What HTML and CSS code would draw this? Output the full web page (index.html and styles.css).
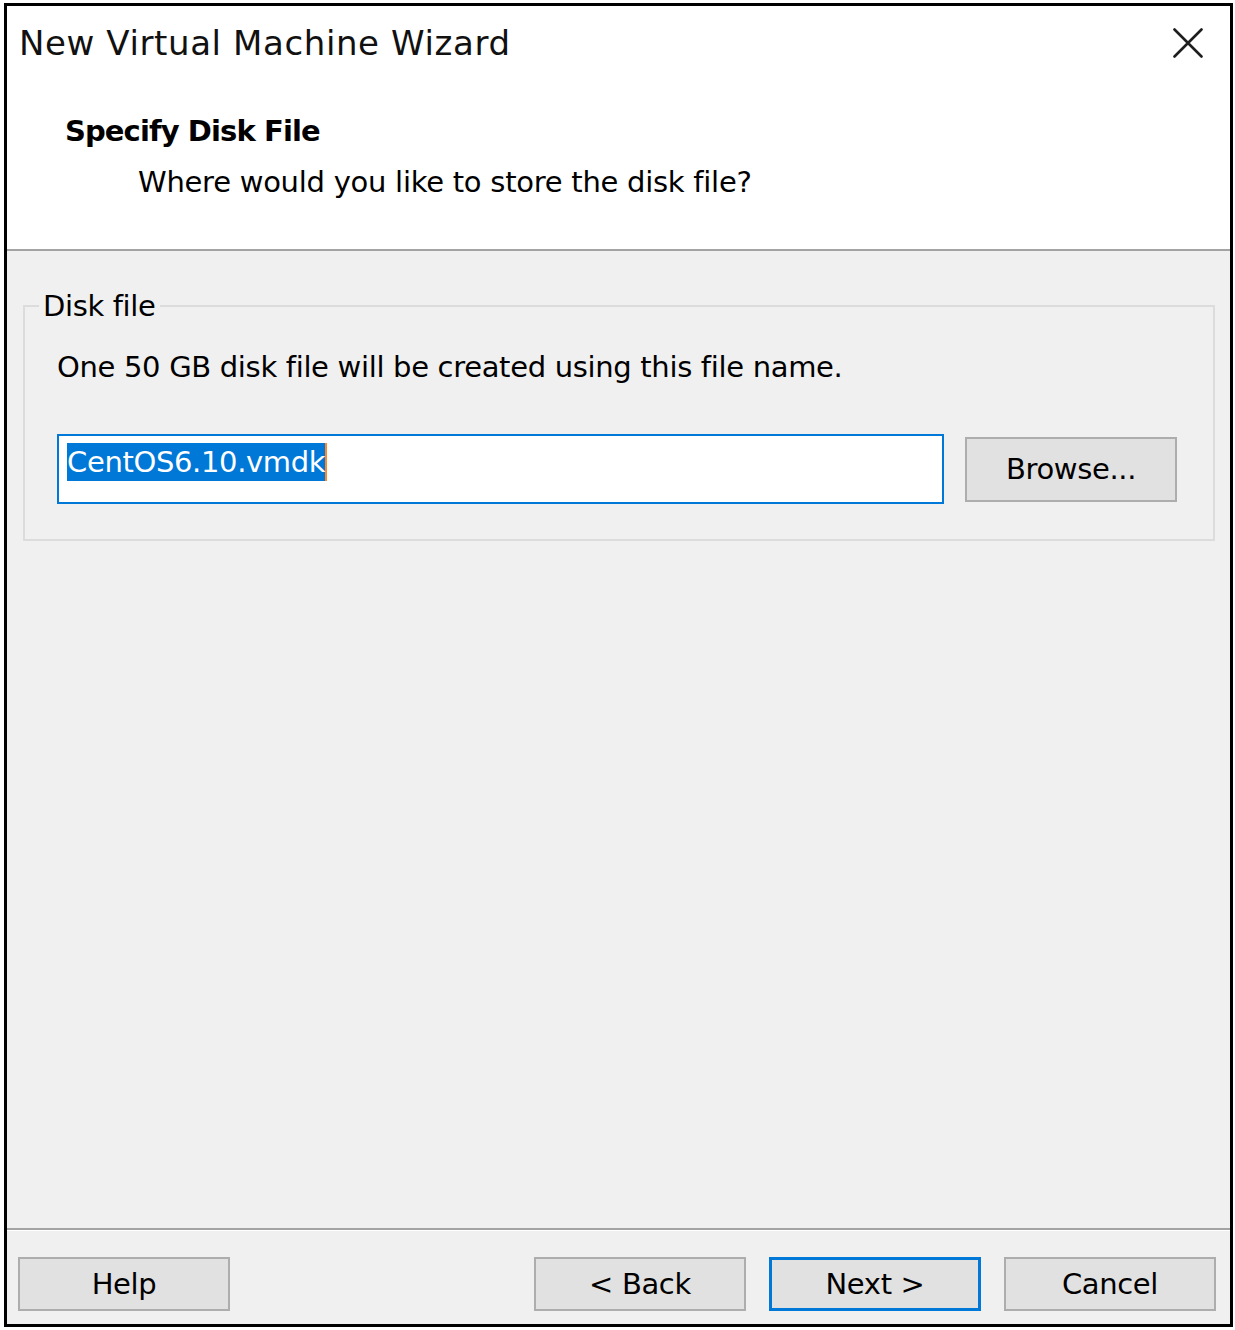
FILE: index.html
```html
<!DOCTYPE html>
<html lang="en">
<head>
<meta charset="utf-8">
<title>New Virtual Machine Wizard</title>
<link rel="stylesheet" href="styles.css">
</head>
<body>
<div class="dialog">
  <header class="head">
    <div class="title-row">
      <h1 class="title">New Virtual Machine Wizard</h1>
      <svg class="close" width="30" height="30" viewBox="0 0 30 30" aria-label="Close">
        <path d="M1.5 1.5 L28.5 28.5 M28.5 1.5 L1.5 28.5" stroke="#1e1e1e" stroke-width="2.6" stroke-linecap="round" fill="none"/>
      </svg>
    </div>
    <h2 class="step">Specify Disk File</h2>
    <p class="question">Where would you like to store the disk file?</p>
  </header>
  <main class="body">
    <fieldset class="group">
      <legend class="legend">Disk file</legend>
      <div class="group-body">
        <p class="info">One 50 GB disk file will be created using this file name.</p>
        <div class="file-row">
          <div class="textbox"><span class="sel">CentOS6.10.vmdk</span></div>
          <button class="btn browse" type="button">Browse...</button>
        </div>
      </div>
    </fieldset>
  </main>
  <footer class="foot">
    <button class="btn" type="button">Help</button>
    <div class="nav">
      <button class="btn" type="button">&lt; Back</button>
      <button class="btn default" type="button">Next &gt;</button>
      <button class="btn" type="button">Cancel</button>
    </div>
  </footer>
</div>
</body>
</html>
```
FILE: styles.css
```css
html, body {
  margin: 0;
  padding: 0;
  background: #ffffff;
}

body {
  font-family: "DejaVu Sans", "Liberation Sans", sans-serif;
  color: #000;
}

.dialog {
  box-sizing: border-box;
  width: 1229px;
  height: 1324px;
  margin: 3px 0 0 4px;
  border: 3px solid #000;
  display: flex;
  flex-direction: column;
  background: #f0f0f0;
}

.head {
  background: #fff;
  padding: 17px 0 49px;
  border-bottom: 2px solid #a3a3a3;
}

.title-row {
  display: flex;
  align-items: center;
  justify-content: space-between;
  padding: 0 27px 0 12px;
}

.title {
  margin: 0;
  font-size: 34px;
  line-height: 40px;
  font-weight: normal;
  letter-spacing: 0.6px;
  color: #111;
}

.close {
  display: block;
}

.step {
  margin: 50px 0 0;
  padding-left: 58px;
  font-size: 29px;
  line-height: 36px;
  font-weight: bold;
  letter-spacing: -0.9px;
}

.question {
  margin: 15px 0 0;
  padding-left: 131px;
  font-size: 29px;
  line-height: 36px;
  letter-spacing: -0.26px;
}

.body {
  flex: 1;
  padding: 37px 15px 0 16px;
  border-bottom: 2px solid #a3a3a3;
}

.group {
  margin: 0;
  padding: 0;
  border: 2px solid #dcdcdc;
  min-inline-size: 0;
}

.group-body {
  padding: 0 36px 35px 32px;
}

.legend {
  margin-left: 14px;
  padding: 0 4px;
  font-size: 29px;
  line-height: 36px;
  letter-spacing: -0.35px;
}

.info {
  margin: 25px 0 0;
  font-size: 29px;
  line-height: 36px;
  letter-spacing: -0.32px;
}

.file-row {
  margin-top: 49px;
  display: flex;
  align-items: center;
  gap: 21px;
}

.textbox {
  flex: 1;
  background: #fff;
  border: 2px solid #0078d7;
  padding: 7px 8px 21px;
  font-size: 29px;
  letter-spacing: -0.35px;
  line-height: 38px;
}

.sel {
  display: inline-block;
  vertical-align: top;
  background: #0078d7;
  color: #fff;
  line-height: 38px;
  border-right: 2px solid #ff8728;
}

.btn {
  box-sizing: border-box;
  width: 212px;
  height: 54px;
  margin: 0;
  padding: 0;
  background: #e1e1e1;
  border: 2px solid #adadad;
  border-radius: 0;
  font-family: "DejaVu Sans", "Liberation Sans", sans-serif;
  font-size: 29px;
  letter-spacing: -0.35px;
  color: #000;
  display: flex;
  align-items: center;
  justify-content: center;
}

.browse {
  width: 212px;
  height: 65px;
}

.btn.default {
  border: 3px solid #0078d7;
}

.foot {
  box-shadow: inset 0 1px 0 #ffffff;
  display: flex;
  justify-content: space-between;
  padding: 27px 14px 13px 11px;
}

.nav {
  display: flex;
  gap: 23px;
}
```
